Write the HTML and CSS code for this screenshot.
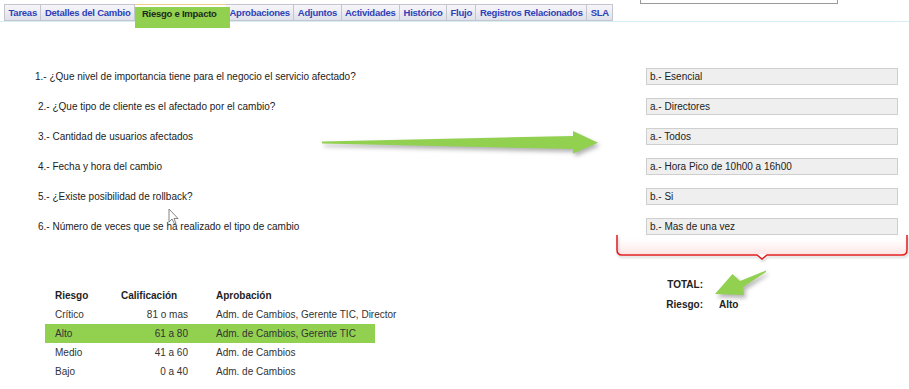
FILE: index.html
```html
<!DOCTYPE html>
<html lang="es">
<head>
    <meta charset="UTF-8">
    <title>Riesgo e Impacto</title>
    <link rel="stylesheet" href="styles.css">
</head>
<body>
    <div class="page">
        <div class="tabs_bar">
            <span class="tab">Tareas</span>
            <span class="tab">Detalles del Cambio</span>
            <span class="tab tab_active">Riesgo e Impacto</span>
            <span class="tab">Aprobaciones</span>
            <span class="tab">Adjuntos</span>
            <span class="tab">Actividades</span>
            <span class="tab">Histórico</span>
            <span class="tab">Flujo</span>
            <span class="tab">Registros Relacionados</span>
            <span class="tab">SLA</span>
            <div class="search_box"></div>
        </div>

        <div class="questions">
            <div class="question question_first">1.- ¿Que nivel de importancia tiene para el negocio el servicio afectado?</div>
            <div class="answer">b.- Esencial</div>

            <div class="question">2.- ¿Que tipo de cliente es el afectado por el cambio?</div>
            <div class="answer">a.- Directores</div>

            <div class="question">3.- Cantidad de usuarios afectados</div>
            <div class="answer">a.- Todos</div>

            <div class="question">4.- Fecha y hora del cambio</div>
            <div class="answer">a.- Hora Pico de 10h00 a 16h00</div>

            <div class="question">5.- ¿Existe posibilidad de rollback?</div>
            <div class="answer">b.- Si</div>

            <div class="question">6.- Número de veces que se ha realizado el tipo de cambio</div>
            <div class="answer">b.- Mas de una vez</div>
        </div>

        <div class="bottom">
            <table class="risk_table">
                <tr>
                    <th class="col_risk">Riesgo</th>
                    <th class="col_score">Calificación</th>
                    <th class="col_approval">Aprobación</th>
                </tr>
                <tr>
                    <td class="col_risk">Crítico</td>
                    <td class="col_score num">81 o mas</td>
                    <td class="col_approval">Adm. de Cambios, Gerente TIC, Director</td>
                </tr>
                <tr class="row_marked">
                    <td class="col_risk">Alto</td>
                    <td class="col_score num">61 a 80</td>
                    <td class="col_approval">Adm. de Cambios, Gerente TIC</td>
                </tr>
                <tr>
                    <td class="col_risk">Medio</td>
                    <td class="col_score num">41 a 60</td>
                    <td class="col_approval">Adm. de Cambios</td>
                </tr>
                <tr>
                    <td class="col_risk">Bajo</td>
                    <td class="col_score num">0 a 40</td>
                    <td class="col_approval">Adm. de Cambios</td>
                </tr>
            </table>

            <div class="summary">
                <span class="summary_label">TOTAL:</span>
                <span class="summary_value"></span>
                <span class="summary_label">Riesgo:</span>
                <span class="summary_value">Alto</span>
            </div>
        </div>

        <!-- notas dibujadas encima de la captura -->
        <svg class="annotations" width="909" height="389" viewBox="0 0 909 389">
            <defs>
                <linearGradient id="brace_fill" x1="0" y1="0" x2="0" y2="1">
                    <stop offset="0" stop-color="#ffecec" stop-opacity="0"/>
                    <stop offset="1" stop-color="#ffdede" stop-opacity="0.8"/>
                </linearGradient>
            </defs>
            <path class="green_arrow" d="M322 141.5 L573 136 L573 131 L598 142.7 L573 153.5 L573 149 L322 143.5 Z"/>
            <path class="brace_bg" d="M618 238 H906 V254 H618 Z" fill="url(#brace_fill)"/>
            <path class="brace" d="M617 235 V250 Q617 255 622 255 H757 L762 259 L767 255 H902 Q907 255 907 250 V235"/>
            <path class="green_arrow" d="M766 270.5 L740 281 L732.5 274 L715 294 L744 295 L743 287 L766 272 Z"/>
            <path class="cursor" d="M169 209 V222 L172 219 L174.5 224 L176 223.3 L174 218.5 L178 218.5 Z"/>
        </svg>
    </div>
</body>
</html>
```

FILE: styles.css
```css
body {
    margin: 0;
    font-family: "Liberation Sans", Arial, sans-serif;
    font-size: 10px;
    color: #222;
    background: #fff;
}

.page {
    position: relative;
    width: 909px;
    height: 389px;
    overflow: hidden;
}

.tabs_bar {
    display: flex;
    align-items: flex-start;
    height: 17px;
    margin-top: 4px;
    padding-left: 4px;
    border-bottom: 1px solid #d5eef2;
}

.tab {
    height: 17px;
    box-sizing: border-box;
    padding: 0 3.5px;
    line-height: 15px;
    border: 1px solid #c4c5cf;
    border-left: none;
    background: linear-gradient(#f7f7fa, #dfe0e9);
    color: #2e3fb8;
    font-size: 9.5px;
    font-weight: bold;
    letter-spacing: -0.25px;
    white-space: nowrap;
}

.tab:first-child {
    border-left: 1px solid #c4c5cf;
}

.tab_active {
    position: relative;
    z-index: 1;
    width: 95px;
    height: 21px;
    margin-top: 3px;
    margin-right: -4px;
    padding-left: 7px;
    line-height: 14px;
    border: none;
    background: #92d050;
    color: #1d2a1a;
}

.tab_active::before {
    content: "";
    position: absolute;
    left: 0;
    right: 4px;
    top: -3px;
    height: 2px;
    background: #fff;
    border-top: 1px solid #f1cf86;
}

.search_box {
    width: 198px;
    height: 4px;
    box-sizing: border-box;
    margin-top: -4px;
    margin-left: 27px;
    border: 1px solid #9a9a9a;
    border-top: none;
}

.questions {
    display: grid;
    grid-template-columns: 646px 252px;
    grid-auto-rows: 30px;
    align-items: center;
    margin-top: 39px;
}

.question {
    padding-left: 38px;
    white-space: nowrap;
}

.question_first {
    padding-left: 35px;
}

.answer {
    height: 17px;
    box-sizing: border-box;
    padding-left: 3px;
    line-height: 15px;
    border: 1px solid #cfcfcf;
    background: #efefef;
}

.bottom {
    display: flex;
    align-items: flex-start;
}

.risk_table {
    table-layout: fixed;
    width: 330px;
    margin-top: 45px;
    margin-left: 45px;
    border-collapse: collapse;
}

.risk_table th,
.risk_table td {
    height: 19px;
    padding: 0;
    text-align: left;
    white-space: nowrap;
    color: #333;
}

.risk_table th {
    font-weight: bold;
    color: #1e1e1e;
}

.col_risk {
    width: 66px;
    padding-left: 10px !important;
}

.col_score {
    width: 67px;
}

.col_approval {
    padding-left: 28px !important;
}

.risk_table td.num {
    text-align: right;
}

.row_marked td {
    background: #92d050;
}

.summary {
    display: grid;
    grid-template-columns: 43px 60px;
    grid-auto-rows: 20px;
    column-gap: 16px;
    align-items: center;
    margin-top: 33px;
    margin-left: 285px;
    font-weight: bold;
}

.summary_label {
    text-align: right;
}

.annotations {
    position: absolute;
    left: 0;
    top: 0;
    pointer-events: none;
}

.green_arrow {
    fill: #92d050;
    filter: drop-shadow(2px 3px 2px rgba(0, 0, 0, 0.3));
}

.brace {
    fill: none;
    stroke: #e41c1c;
    stroke-width: 1.5;
    filter: drop-shadow(1px 2px 1px rgba(0, 0, 0, 0.2));
}

.cursor {
    fill: #fff;
    stroke: #666;
    stroke-width: 0.8;
}
```
